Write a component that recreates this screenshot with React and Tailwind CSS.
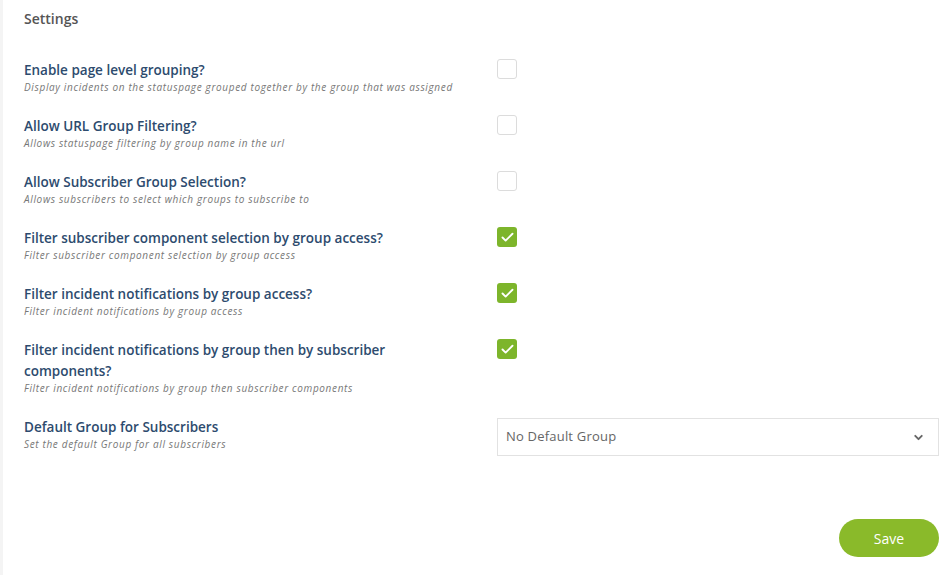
import React, { useState } from 'react';
import { ChevronDown, Check } from 'lucide-react';

const options = [
    {
        label: 'Enable page level grouping?',
        desc: 'Display incidents on the statuspage grouped together by the group that was assigned',
        checked: false,
    },
    {
        label: 'Allow URL Group Filtering?',
        desc: 'Allows statuspage filtering by group name in the url',
        checked: false,
    },
    {
        label: 'Allow Subscriber Group Selection?',
        desc: 'Allows subscribers to select which groups to subscribe to',
        checked: false,
    },
    {
        label: 'Filter subscriber component selection by group access?',
        desc: 'Filter subscriber component selection by group access',
        checked: true,
    },
    {
        label: 'Filter incident notifications by group access?',
        desc: 'Filter incident notifications by group access',
        checked: true,
    },
    {
        label: 'Filter incident notifications by group then by subscriber components?',
        desc: 'Filter incident notifications by group then subscriber components',
        checked: true,
    },
];

const App = () => {
    const [values, setValues] = useState(options.map((o) => o.checked));

    const toggle = (i) => setValues((v) => v.map((x, j) => (j === i ? !x : x)));

    return (
        <div className="flex min-h-[575px] bg-white font-['Open_Sans',sans-serif]">
            {/* left strip */}
            <div className="w-[3px] bg-[#f4f4f4]"></div>

            <div className="flex-1 pl-[21px] pr-[10px]">
                <h2 className="pt-[10px] text-[14px] font-semibold text-[#555] leading-[18px]">Settings</h2>

                <div className="mt-[32px] flex flex-col gap-[22px]">
                    {options.map((opt, i) => (
                        <div key={i} className="flex items-start">
                            <div className="w-[473px]">
                                <p className="max-w-[385px] text-[13.5px] font-semibold text-[#2d4b6e] leading-[21px]">{opt.label}</p>
                                <p className="whitespace-nowrap text-[10px] italic text-[#777] leading-[13px] tracking-[0.65px]">{opt.desc}</p>
                            </div>
                            <button
                                onClick={() => toggle(i)}
                                className={`-mt-[1px] w-[20px] h-[20px] rounded-[3px] flex items-center justify-center ${values[i]
                                    ? 'bg-[#7db52b]'
                                    : 'bg-white border border-[#dcdcdc]'
                                    }`}
                            >
                                {values[i] && <Check className="w-[15px] h-[15px] text-white" strokeWidth={3} />}
                            </button>
                        </div>
                    ))}

                    <div className="flex items-start">
                        <div className="w-[473px]">
                            <p className="text-[13.5px] font-semibold text-[#2d4b6e] leading-[21px]">Default Group for Subscribers</p>
                            <p className="whitespace-nowrap text-[10px] italic text-[#777] leading-[13px] tracking-[0.65px]">Set the default Group for all subscribers</p>
                        </div>
                        <div className="mt-[1px] flex-1 h-[38px] border border-[#e2e2e2] flex items-center justify-between pl-[8px] pr-[13px]">
                            <span className="text-[13px] text-[#666] tracking-[0.2px]">No Default Group</span>
                            <ChevronDown className="w-[13px] h-[13px] text-[#666]" strokeWidth={3.5} />
                        </div>
                    </div>
                </div>

                <div className="flex justify-end mt-[63px]">
                    <button className="w-[100px] h-[38px] rounded-full bg-[#8aba2a] text-white text-[14px] font-medium">
                        Save
                    </button>
                </div>
            </div>
        </div>
    );
};

export default App;
